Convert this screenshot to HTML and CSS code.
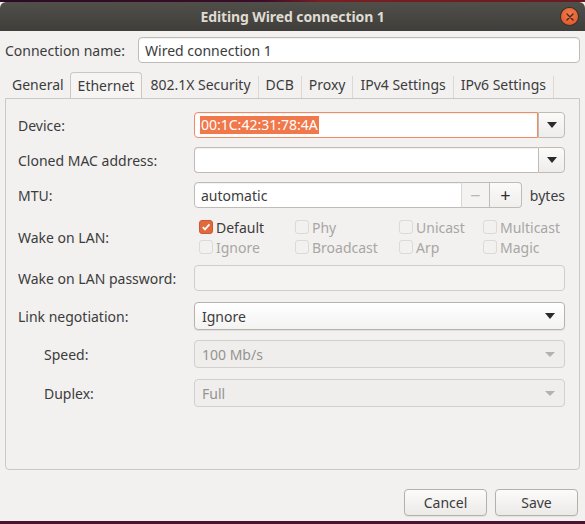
FILE: index.html
```html
<!DOCTYPE html>
<html>
<head>
<meta charset="utf-8">
<link rel="stylesheet" href="styles.css">
</head>
<body>
<div class="window">
  <div class="strip top"></div>
  <div class="titlebar">
    <span class="title">Editing Wired connection 1</span>
    <span class="close"><svg width="10" height="10" viewBox="0 0 10 10"><path d="M2 2L8 8M8 2L2 8" stroke="#3a2a20" stroke-width="1.4" stroke-linecap="round"/></svg></span>
  </div>
  <div class="body">
    <div class="conn-row">
      <span class="conn-label">Connection name:</span>
      <div class="entry conn-entry">Wired connection 1</div>
    </div>
    <div class="tabs">
      <div class="tab">General</div>
      <div class="tab active">Ethernet</div>
      <div class="tab">802.1X Security</div>
      <div class="tab">DCB</div>
      <div class="tab">Proxy</div>
      <div class="tab">IPv4 Settings</div>
      <div class="tab last">IPv6 Settings</div>
    </div>
    <div class="panel">
      <div class="row r-device">
        <span class="label">Device:</span>
        <div class="combo-entry">
          <div class="entry focus"><span class="sel">00:1C:42:31:78:4A</span></div>
          <div class="cbtn"><span class="arrow"></span></div>
        </div>
      </div>
      <div class="row r-gap9">
        <span class="label">Cloned MAC address:</span>
        <div class="combo-entry">
          <div class="entry"></div>
          <div class="cbtn"><span class="arrow"></span></div>
        </div>
      </div>
      <div class="row r-gap9">
        <span class="label">MTU:</span>
        <div class="spin">
          <div class="entry spin-entry">automatic</div>
          <div class="sbtn minus">&#8722;</div>
          <div class="sbtn plus">+</div>
        </div>
        <span class="unit">bytes</span>
      </div>
      <div class="row r-wol">
        <span class="label">Wake on LAN:</span>
        <div class="checks">
          <div class="chk on"><span class="box"><svg width="10" height="10" viewBox="0 0 10 10"><path d="M1.8 5.2L4 7.4L8.4 2.4" fill="none" stroke="#fff" stroke-width="1.7"/></svg></span>Default</div>
          <div class="chk"><span class="box"></span>Phy</div>
          <div class="chk"><span class="box"></span>Unicast</div>
          <div class="chk"><span class="box"></span>Multicast</div>
          <div class="chk"><span class="box"></span>Ignore</div>
          <div class="chk"><span class="box"></span>Broadcast</div>
          <div class="chk"><span class="box"></span>Arp</div>
          <div class="chk"><span class="box"></span>Magic</div>
        </div>
      </div>
      <div class="row r-pass">
        <span class="label">Wake on LAN password:</span>
        <div class="entry disabled wide"></div>
      </div>
      <div class="row r-link">
        <span class="label">Link negotiation:</span>
        <div class="combo"><span>Ignore</span><span class="arrow"></span></div>
      </div>
      <div class="row r-speed">
        <span class="label indent">Speed:</span>
        <div class="combo disabled"><span>100 Mb/s</span><span class="arrow"></span></div>
      </div>
      <div class="row r-duplex">
        <span class="label indent">Duplex:</span>
        <div class="combo disabled"><span>Full</span><span class="arrow"></span></div>
      </div>
    </div>
    <div class="actions">
      <div class="button">Cancel</div>
      <div class="button">Save</div>
    </div>
  </div>
  <div class="strip bottom"></div>
</div>
</body>
</html>
```
FILE: styles.css
```css
* { box-sizing: border-box; }
html, body { margin: 0; padding: 0; }
body {
  width: 585px; height: 524px; overflow: hidden;
  font-family: "Noto Sans", "DejaVu Sans", sans-serif;
  font-size: 14px; color: #3c3c3c;
  background: #2c0d22;
}
.window { width: 585px; height: 524px; display: flex; flex-direction: column; background: #f2f1f0; }
.strip.top { height: 2px; background: linear-gradient(90deg, #2d0b24 0%, #3a0d29 45%, #7a1f22 55%, #6a1a22 100%); }
.titlebar {
  height: 29px; position: relative;
  background: linear-gradient(#504f4a, #3f3e3a);
  border-radius: 6px 6px 0 0;
  display: flex; align-items: center; justify-content: center;
  padding-bottom: 1px;
}
.title { color: #dfdbd2; font-weight: bold; font-size: 14px; letter-spacing: -0.1px; }
.close {
  position: absolute; right: 7px; top: 6px; width: 17px; height: 17px; border-radius: 50%;
  background: radial-gradient(circle at 50% 35%, #f47a4d, #e0521f);
  display: flex; align-items: center; justify-content: center;
  box-shadow: 0 0 0 1px #3a2e28;
}
.body { flex: 1; padding: 6px 5px 0 5px; display: flex; flex-direction: column; }
.strip.bottom { height: 3px; background: #4a1330; }

.conn-row { display: flex; align-items: center; height: 26px; }
.conn-label { width: 133px; }
.entry {
  height: 26px; border: 1px solid #c1bbb6; border-radius: 4px; background: #fff;
  display: flex; align-items: center; padding-left: 6px;
  box-shadow: inset 0 1px 1px rgba(0,0,0,0.06);
}
.conn-entry { flex: 1; }

.tabs { display: flex; margin-top: 9px; height: 26px; align-items: stretch; }
.tab {
  padding: 0 7px 1px 7px; display: flex; align-items: center;
  background: linear-gradient(#dcd8d4, #dcd8d4) right 4px / 1px 22px no-repeat;
  padding-right: 8px;
}
.tab:first-child { padding-left: 7px; padding-right: 7px; }
.tab.active {
  background: #f6f5f4; border: 1px solid #cdc7c2; border-bottom: none;
  border-radius: 4px 4px 0 0; padding: 0 7px 0 7px; margin-left: -1px; margin-right: 1px;
}
.panel {
  height: 372px; border: 1px solid #cdc7c2; border-radius: 0 0 4px 4px;
  padding: 13px 14px 0 12px; display: flex; flex-direction: column;
}
.row { display: flex; align-items: center; }
.label { width: 176px; flex: none; }
.label.indent { padding-left: 26px; }
.r-gap9 { margin-top: 9px; }
.r-wol { margin-top: 9px; height: 40px; }
.r-pass { margin-top: 8px; }
.r-link { margin-top: 11px; }
.r-speed { margin-top: 10px; }
.r-duplex { margin-top: 11px; }

.combo-entry { flex: 1; display: flex; height: 26px; }
.combo-entry .entry { flex: 1; border-radius: 4px 0 0 4px; border-right: none; }
.entry.focus { border: 1px solid #f08c64; border-right: 1px solid #f08c64; padding-left: 5px; }
.sel { background: #f0784a; color: #fff; line-height: 18px; padding: 0 1px; }
.cbtn {
  width: 27px; border: 1px solid #c1bbb6; border-radius: 0 4px 4px 0;
  background: linear-gradient(#fbfbfa, #efedeb);
  display: flex; align-items: center; justify-content: center;
}
.arrow { width: 0; height: 0; border-left: 5px solid transparent; border-right: 5px solid transparent; border-top: 6px solid #2b2b2b; }

.spin { display: flex; width: 328px; height: 26px; }
.spin-entry { flex: 1; border-radius: 4px 0 0 4px; }
.sbtn {
  border: 1px solid #c1bbb6; border-left: none; display: flex; align-items: center; justify-content: center;
  font-size: 18px; background: #f4f3f2;
}
.sbtn.minus { width: 29px; color: #b8b4b0; border-left: 1px solid #dad6d2; margin-left: -1px; }
.sbtn.plus { width: 32px; color: #2e2e2e; border-radius: 0 4px 4px 0; background: linear-gradient(#fafaf9, #f1efee); }
.unit { margin-left: 8px; }

.checks { display: grid; grid-template-columns: 96px 104px 84px 80px; grid-template-rows: 20px 20px; padding-left: 5px; }
.chk { display: flex; align-items: center; color: #a9a6a3; }
.chk.on { color: #3c3c3c; }
.box {
  width: 14px; height: 14px; border: 1px solid #dcd9d6; border-radius: 3px; background: #f2f1f0;
  margin-right: 3px; display: flex; align-items: center; justify-content: center;
}
.chk.on .box { background: #e2693e; border-color: #c95a31; }

.entry.disabled { background: #f4f3f2; border-color: #d2cdc9; box-shadow: none; }
.wide { flex: 1; }

.combo {
  flex: 1; height: 28px; border: 1px solid #b8b2ad; border-radius: 4px;
  background: linear-gradient(#ffffff, #f4f3f2);
  display: flex; align-items: center; justify-content: space-between; padding: 0 9px 0 7px;
  box-shadow: 0 1px 1px rgba(0,0,0,0.08);
}
.combo .arrow { border-left-width: 5px; border-right-width: 5px; border-top-width: 6px; }
.combo.disabled { background: #efeeed; border-color: #d3cfcb; color: #96938f; box-shadow: none; }
.combo.disabled .arrow { border-top-color: #b5b2ae; border-left-width: 5px; border-right-width: 5px; border-top-width: 5px; }

.actions { display: flex; justify-content: flex-end; gap: 8px; margin-top: 19px; padding-right: 2px; }
.button {
  width: 83px; height: 27px; border: 1px solid #b6b0ab; border-radius: 4px;
  background: linear-gradient(#fbfbfa, #eceae8);
  display: flex; align-items: center; justify-content: center;
  box-shadow: 0 1px 1px rgba(0,0,0,0.06);
}
```
